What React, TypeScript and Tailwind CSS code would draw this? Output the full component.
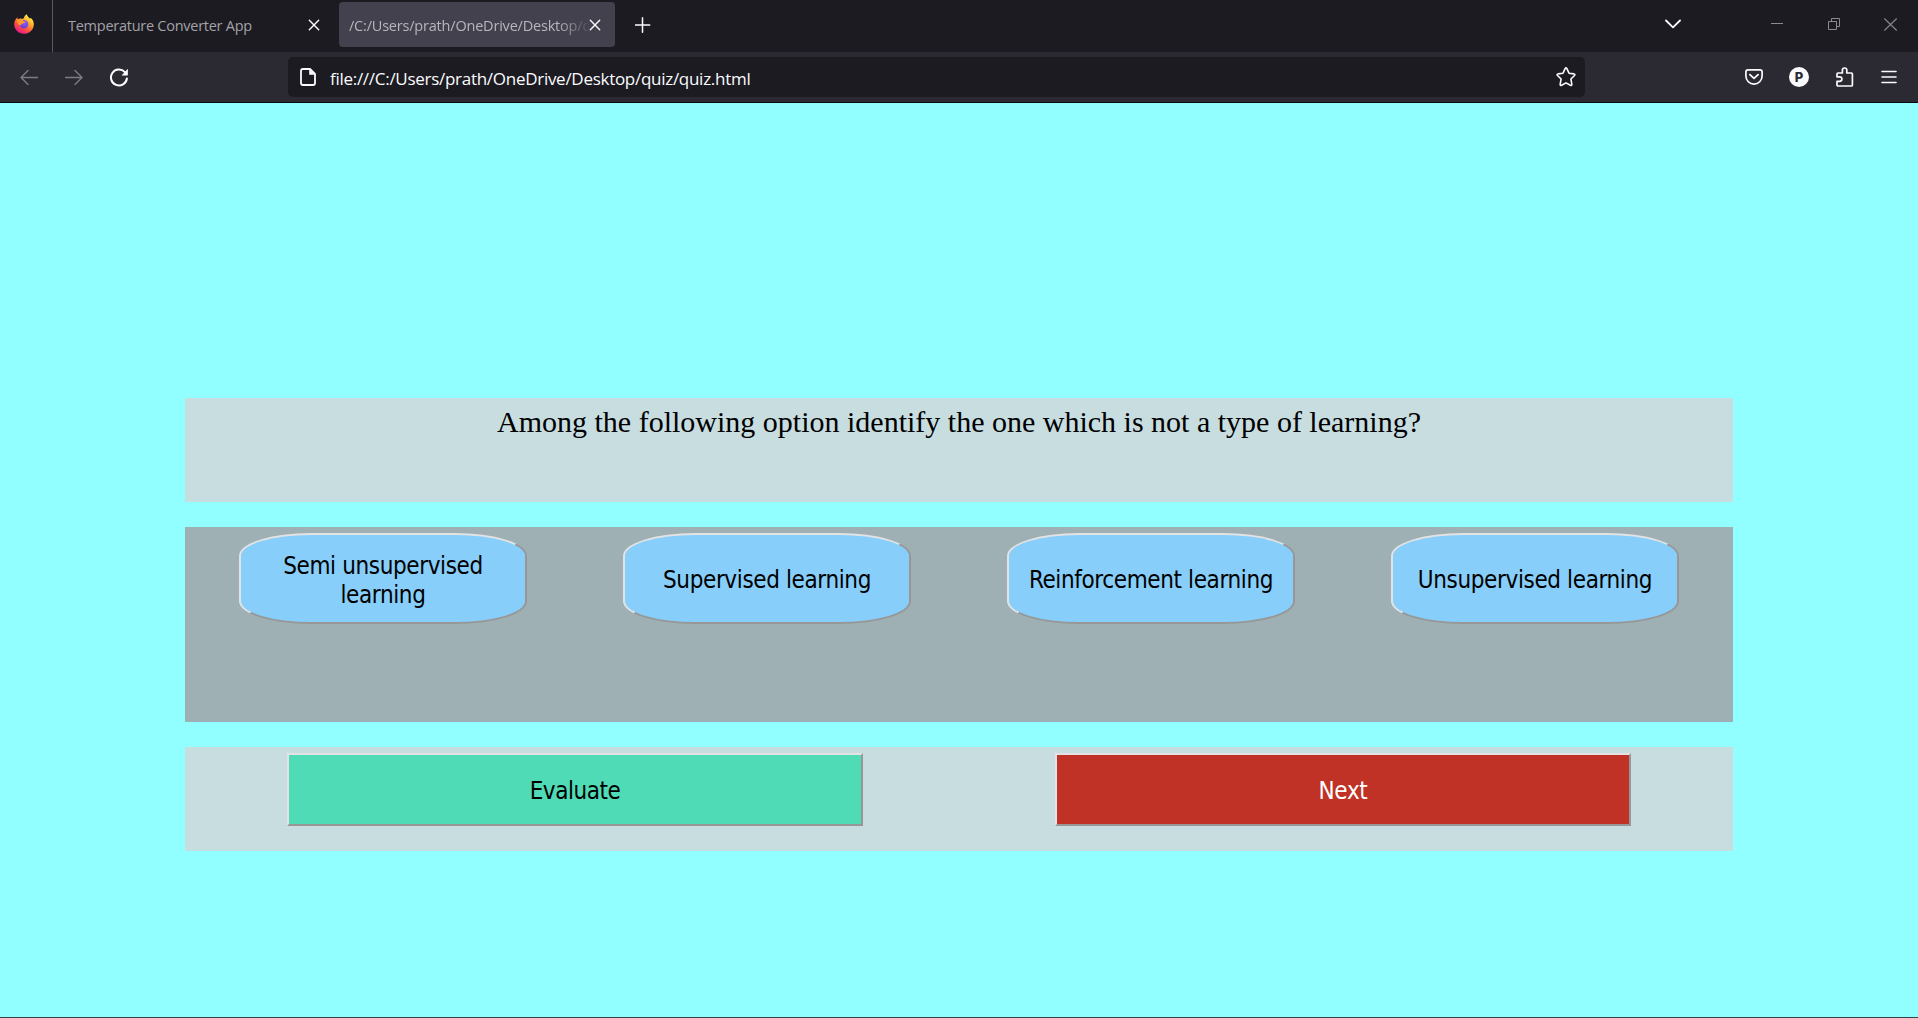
import type { ReactNode } from "react";

const UI = "font-['Open_Sans','Noto_Sans',sans-serif]";
const BUTTON_FONT = "font-['DejaVu_Sans_Condensed','DejaVu_Sans',sans-serif] [font-stretch:condensed]";
const BEVEL = "border-2 border-t-[#e3e3e3] border-l-[#e3e3e3] border-r-[#979797] border-b-[#979797]";

function Icon({ w, h, className = "", children }: { w: number; h: number; className?: string; children: ReactNode }) {
  return (
    <svg width={w} height={h} viewBox={`0 0 ${w} ${h}`} fill="none" className={`block shrink-0 ${className}`}>
      {children}
    </svg>
  );
}

function FirefoxLogo() {
  return (
    <Icon w={20} h={20}>
      <defs>
        <linearGradient id="flame" x1="16" y1="2" x2="5" y2="19" gradientUnits="userSpaceOnUse">
          <stop offset="0" stopColor="#fff44f" />
          <stop offset="0.35" stopColor="#ffa72b" />
          <stop offset="0.65" stopColor="#ff5340" />
          <stop offset="1" stopColor="#e8158c" />
        </linearGradient>
        <radialGradient id="globe" cx="0.6" cy="0.3" r="0.8">
          <stop offset="0" stopColor="#9059ff" />
          <stop offset="1" stopColor="#5b3fc4" />
        </radialGradient>
      </defs>
      <path
        d="M3.6 3.2C3.4 4.2 3.5 5 3.8 5.6L5.6 4.8C6.4 4.4 7.2 4.7 8 4.9L9.8 4.3C10.2 2.4 11.4 1 12.8.3C13.2 2.3 14.4 3.2 15.8 4.4L16.8 3.9C18.8 5.4 19.8 7.8 19.8 10.2C19.8 15.6 15.4 19.8 10 19.8C4.6 19.8.2 15.6.2 10.3C.2 7.6 1.3 5 3.6 3.2Z"
        fill="url(#flame)"
      />
      <circle cx="10" cy="10.2" r="4.2" fill="url(#globe)" />
      <path d="M3.6 3.2C3.4 4.2 3.5 5 3.8 5.6L5.6 4.8C7 5 8 5.3 8.4 6C9 7.2 10.6 7.4 11.4 7.8C11 9.2 9.6 9 8.6 9.6C7.6 10.2 7 11.4 5.4 11.2L3 8Z" fill="#ff9a2a" />
    </Icon>
  );
}

function CloseIcon() {
  return (
    <Icon w={12} h={12}>
      <path d="M1.3 1.3L10.7 10.7M10.7 1.3L1.3 10.7" stroke="#fbfbfe" strokeWidth="1.4" strokeLinecap="round" />
    </Icon>
  );
}

function TabStrip() {
  return (
    <div className="flex h-[52px] items-start bg-[#1c1b22]">
      <div className="flex h-[52px] w-[53px] shrink-0 border-r border-[#5b5a61] pt-[14px] pl-[14px]">
        <FirefoxLogo />
      </div>
      <div className="flex h-[49px] w-[286px] shrink-0 items-center pl-[15px]">
        <span className="w-[240px] pt-[2px] text-[14.5px] leading-[20px] tracking-[-0.26px] whitespace-nowrap text-[#a3a2a6]">Temperature Converter App</span>
        <CloseIcon />
      </div>
      <div className="mt-[2px] flex h-[45px] w-[276px] shrink-0 items-center rounded bg-[#42414d] pl-[10px]">
        <span className="w-[240px] overflow-hidden [mask-image:linear-gradient(to_right,black_208px,transparent_243px)] pt-[2px] text-[14.5px] leading-[20px] tracking-[-0.2px] whitespace-nowrap text-[#b7b6bc]">
          /C:/Users/prath/OneDrive/Desktop/quiz/quiz.html
        </span>
        <CloseIcon />
      </div>
      <div className="flex h-[49px] flex-1 items-center pl-5">
        <Icon w={16} h={16}>
          <path d="M7.5 0.8V15.2M0.3 8H14.7" stroke="#fbfbfe" strokeWidth="1.5" strokeLinecap="round" />
        </Icon>
      </div>
      <div className="flex h-[48px] items-center pr-5">
        <Icon w={16} h={10}>
          <path d="M1 1.5L8 8.3L15 1.5" stroke="#fbfbfe" strokeWidth="1.8" strokeLinecap="round" strokeLinejoin="round" />
        </Icon>
        <Icon w={12} h={12} className="ml-[90px]">
          <path d="M0 5.5H12" stroke="#8b8a8f" />
        </Icon>
        <Icon w={13} h={12} className="ml-[45px]">
          <path d="M0.5 3.5H8.5V11.5H0.5ZM3.5 3.5V0.5H11.5V8.5H8.5" stroke="#8b8a8f" />
        </Icon>
        <Icon w={14} h={13} className="ml-[43px]">
          <path d="M0.3 0.5L12.7 12.5M12.7 0.5L0.3 12.5" stroke="#8b8a8f" strokeWidth="1.1" />
        </Icon>
      </div>
    </div>
  );
}

function Toolbar() {
  return (
    <div className="flex h-[51px] items-center border-b border-[#0c0c0d] bg-[#2b2a33] pl-5 text-[#fbfbfe]">
      <Icon w={18} h={16}>
        <path d="M17.5 8.5H1M8 1.5L1 8.5L8 15.5" stroke="#7d7c83" strokeWidth="1.4" strokeLinecap="round" strokeLinejoin="round" />
      </Icon>
      <Icon w={18} h={16} className="ml-[27px]">
        <path d="M0.5 8.5H17M10 1.5L17 8.5L10 15.5" stroke="#7d7c83" strokeWidth="1.4" strokeLinecap="round" strokeLinejoin="round" />
      </Icon>
      <Icon w={20} h={20} className="ml-[26px]">
        <path d="M15.9 5.1A8 8 0 1 0 17.9 11.5" stroke="currentColor" strokeWidth="2" strokeLinecap="round" />
        <path d="M18.9 1.7V7.7Q18.9 8.4 18.2 8.4H12.5Z" fill="currentColor" />
      </Icon>
      <div className="ml-[159px] flex h-10 w-[1297px] shrink-0 items-center rounded-[5px] bg-[#1c1b22] pr-[9px] pl-3">
        <Icon w={16} h={18}>
          <path d="M3 1H10L15 6V15Q15 17 13 17H3Q1 17 1 15V3Q1 1 3 1Z" stroke="currentColor" strokeWidth="1.8" strokeLinejoin="round" />
          <path d="M9.2 1V6.8H15Z" fill="currentColor" />
        </Icon>
        <span className="ml-[14px] flex-1 pt-[3px] text-[17px] leading-[24px] tracking-[-0.28px] whitespace-nowrap">
          file:///C:/Users/prath/OneDrive/Desktop/quiz/quiz.html
        </span>
        <Icon w={20} h={20}>
          <path
            d="M9.1 1.6Q10 0.1 10.9 1.6L13 6.2L18 6.9Q19.5 7.3 18.5 8.5L14.9 12L15.8 17.2Q15.9 18.9 14.4 18.3L10 15.9L5.6 18.3Q4.1 18.9 4.2 17.2L5.1 12L1.5 8.5Q0.5 7.3 2 6.9L7 6.2Z"
            stroke="currentColor" strokeWidth="1.6" strokeLinejoin="round"
          />
        </Icon>
      </div>
      <Icon w={18} h={16} className="ml-[160px]">
        <path d="M3 0.9H15Q17.1 0.9 17.1 3V7A8.1 8.1 0 0 1 0.9 7V3Q0.9 0.9 3 0.9Z" stroke="currentColor" strokeWidth="1.7" />
        <path d="M4.9 5.6L9 9.4L13.1 5.6" stroke="currentColor" strokeWidth="1.8" strokeLinecap="round" strokeLinejoin="round" />
      </Icon>
      <span className="ml-[26px] flex size-5 shrink-0 items-center justify-center rounded-full bg-[#fbfbfe] font-['Inter',sans-serif] text-[13px] leading-none font-extrabold text-[#2b2a33]">P</span>
      <Icon w={18} h={20} className="ml-[27px]">
        <path
          d="M1 18V14.4H3.6A2.3 2.3 0 0 0 3.6 9.8H1V7Q1 6 2 6H6.4V3.2A2.2 2.2 0 0 1 10.8 3.2V6H15.4Q16.4 6 16.4 7V18Q16.4 19 15.4 19H2Q1 19 1 18Z"
          stroke="currentColor" strokeWidth="1.7" strokeLinejoin="round"
        />
      </Icon>
      <Icon w={16} h={14} className="ml-[27px]">
        <path d="M1 1.5H15M1 7H15M1 12.5H15" stroke="currentColor" strokeWidth="1.6" strokeLinecap="round" />
      </Icon>
    </div>
  );
}

const OPTIONS = ["Semi unsupervised learning", "Supervised learning", "Reinforcement learning", "Unsupervised learning"];

function Quiz() {
  return (
    <main className="flex flex-1 flex-col items-center gap-[25px] bg-[#91ffff] pt-[295px] text-black">
      <section className="h-[104px] w-[1548px] bg-[#c8dde0] p-[6px] text-center font-['Liberation_Serif',serif] text-[30px] leading-[35px]">
        Among the following option identify the one which is not a type of learning?
      </section>
      <section className="grid h-[195px] w-[1548px] grid-cols-4 items-start justify-items-center bg-[#9eb0b3] p-[6px]">
        {OPTIONS.map((label) => (
          <button key={label} className={`${BUTTON_FONT} ${BEVEL} h-[91px] w-[288px] rounded-[25%] bg-[#87cefa] px-4 pt-[4px] text-[24px] leading-[29px] tracking-[-0.38px]`}>
            {label}
          </button>
        ))}
      </section>
      <section className="grid h-[104px] w-[1548px] grid-cols-2 items-start justify-items-center bg-[#c8dde0] p-[6px]">
        <button className={`${BUTTON_FONT} ${BEVEL} h-[73px] w-[576px] bg-[#50dbb7] pt-[4px] text-[24px] leading-[29px] tracking-[-0.45px]`}>Evaluate</button>
        <button className={`${BUTTON_FONT} ${BEVEL} h-[73px] w-[576px] bg-[#bf3225] pt-[4px] text-[24px] leading-[29px] tracking-[-0.28px] text-white`}>Next</button>
      </section>
    </main>
  );
}

export default function App() {
  return (
    <div className={`${UI} flex h-[1018px] w-[1918px] flex-col overflow-hidden border-b border-[#3a4346]`}>
      <TabStrip />
      <Toolbar />
      <Quiz />
    </div>
  );
}
